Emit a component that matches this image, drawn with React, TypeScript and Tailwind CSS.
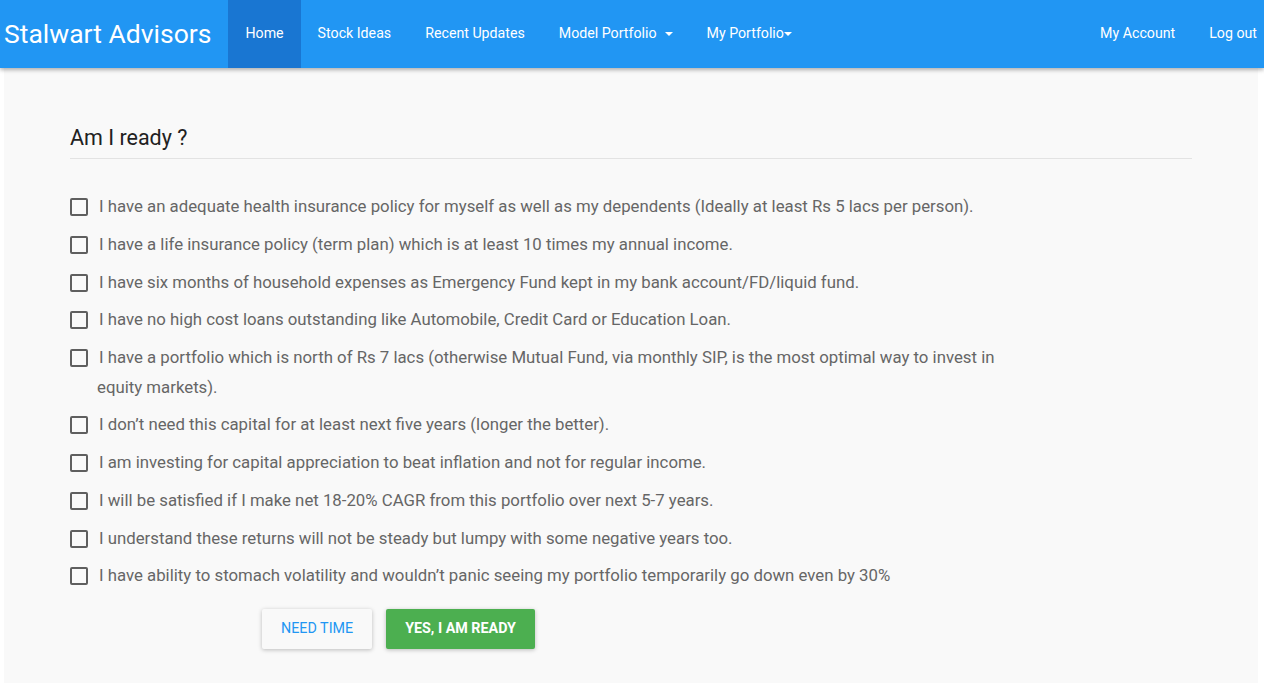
import React from 'react';

const items = [
  'I have an adequate health insurance policy for myself as well as my dependents (Ideally at least Rs 5 lacs per person).',
  'I have a life insurance policy (term plan) which is at least 10 times my annual income.',
  'I have six months of household expenses as Emergency Fund kept in my bank account/FD/liquid fund.',
  'I have no high cost loans outstanding like Automobile, Credit Card or Education Loan.',
  'I have a portfolio which is north of Rs 7 lacs (otherwise Mutual Fund, via monthly SIP, is the most optimal way to invest in equity markets).',
  'I don\u2019t need this capital for at least next five years (longer the better).',
  'I am investing for capital appreciation to beat inflation and not for regular income.',
  'I will be satisfied if I make net 18-20% CAGR from this portfolio over next 5-7 years.',
  'I understand these returns will not be steady but lumpy with some negative years too.',
  'I have ability to stomach volatility and wouldn\u2019t panic seeing my portfolio temporarily go down even by 30%',
];

const Caret: React.FC = () => (
  <span className="inline-block w-0 h-0 border-l-[4px] border-r-[4px] border-t-[4px] border-l-transparent border-r-transparent border-t-white align-middle" />
);

const App: React.FC = () => {
  return (
    <div className="min-h-[683px] bg-white font-['Roboto',sans-serif]">
      <nav className="relative z-10 h-[68px] bg-[#2196f3] flex items-stretch text-white shadow-[0_2px_4px_rgba(0,0,0,0.3)]">
        <div className="flex items-center pl-[4px] pr-[17px] text-[26.5px] leading-none">Stalwart Advisors</div>
        <ul className="flex items-stretch text-[14.2px]">
          <li className="flex items-center px-[17px] bg-[#1976d2]">Home</li>
          <li className="flex items-center px-[17px]">Stock Ideas</li>
          <li className="flex items-center px-[17px]">Recent Updates</li>
          <li className="flex items-center px-[17px] gap-[8px]">
            Model Portfolio <Caret />
          </li>
          <li className="flex items-center px-[17px]">
            My Portfolio
            <Caret />
          </li>
        </ul>
        <ul className="ml-auto flex items-stretch text-[14.2px] pr-[7px]">
          <li className="flex items-center px-[17px]">My Account</li>
          <li className="flex items-center pl-[17px]">Log out</li>
        </ul>
      </nav>

      <main className="ml-[4px] w-[1254px] min-h-[615px] bg-[#f9f9f9] px-[66px] pt-[56px] pb-[30px]">
        <h2 className="text-[21.5px] leading-[28px] text-[#212121] pb-[6px] border-b border-[#e3e3e3]">Am I ready ?</h2>

        <div className="mt-[33px] w-[950px] flex flex-col gap-[8.25px]">
          {items.map((text) => (
            <label key={text} className="flex items-start gap-[9px] text-[16.8px] leading-[29.5px] text-[#666666]">
              <span className="mt-[6px] w-[18px] h-[18px] shrink-0 border-2 border-[#5f5f5f] rounded-[2px]" />
              <span className="indent-[2px]">{text}</span>
            </label>
          ))}
        </div>

        <div className="mt-[18px] ml-[192px] flex gap-[14px]">
          <button className="h-[40px] px-[19px] rounded-[2px] bg-[#f9f9f9] text-[#2196f3] text-[14.3px] uppercase shadow-[0_1px_4px_rgba(0,0,0,0.25)]">
            Need Time
          </button>
          <button className="h-[40px] px-[19px] rounded-[2px] bg-[#4caf50] text-white text-[14.3px] font-bold uppercase shadow-[0_1px_4px_rgba(0,0,0,0.25)]">
            Yes, I am ready
          </button>
        </div>
      </main>
    </div>
  );
};

export default App;
